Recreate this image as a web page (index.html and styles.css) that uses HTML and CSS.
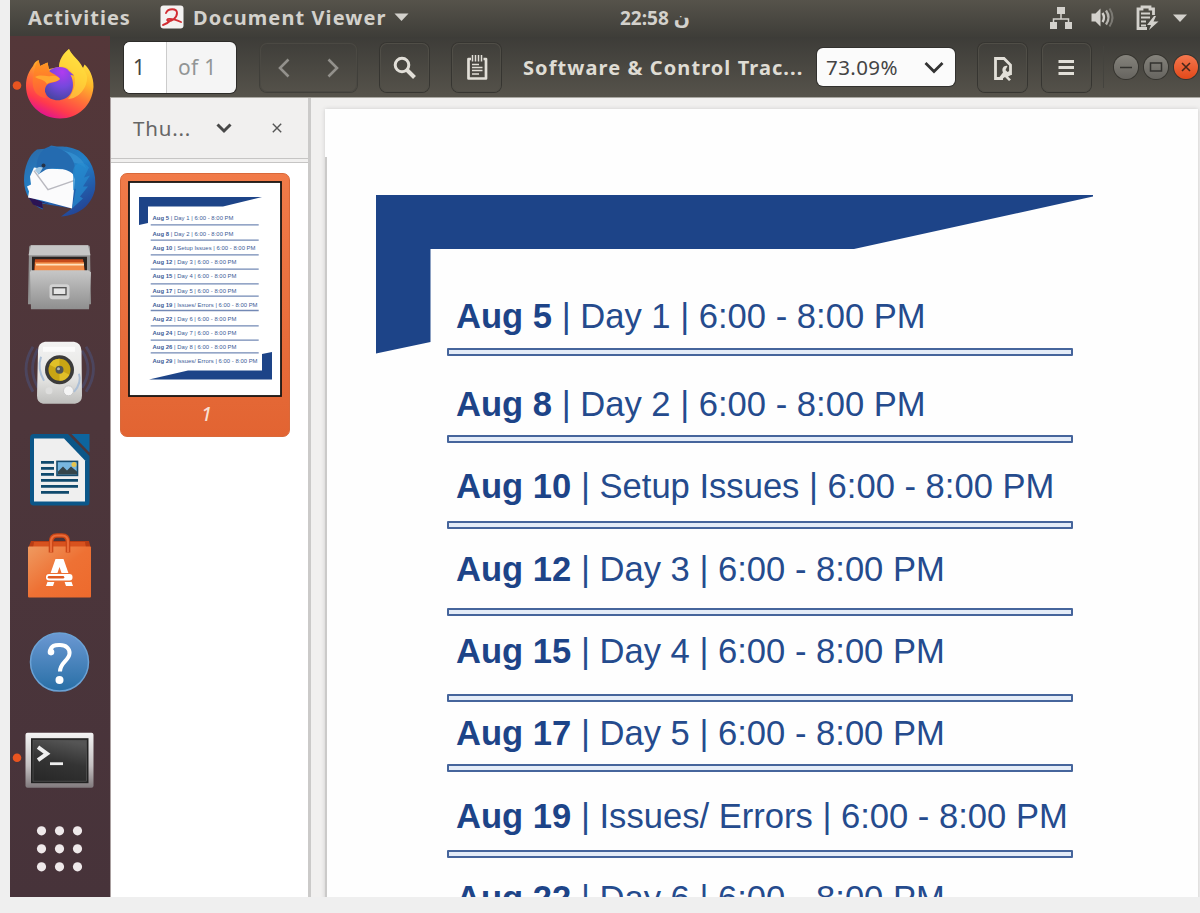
FILE: index.html
```html
<!DOCTYPE html>
<html lang="en">
<head>
<meta charset="utf-8">
<title>Document Viewer</title>
<link rel="stylesheet" href="styles.css">
</head>
<body>
<div class="screen">
  <header class="topbar">
    <span class="activities">Activities</span>
    <svg class="app-icon" width="24" height="24" viewBox="0 0 24 24"><rect x=".5" y=".5" width="23" height="23" rx="3" fill="#f4f2f1"/><path d="M6 8C8 3 17 3 17 8C17 13 11 17 8 16C5 14 10 12 21 17M3 20C7 19 9 17 11 15" fill="none" stroke="#d22d33" stroke-width="1.900" stroke-linecap="round"/></svg>
    <span class="app-name">Document Viewer</span>
    <svg class="app-caret" width="15" height="9" viewBox="0 0 15 9"><path d="M.5.500h14L7.500 8z" fill="#d3d1cc"/></svg>
    <span class="clock">22:58 <span class="day">ن</span></span>
    <svg class="tray" width="140" height="28" viewBox="1048 3 140 28" fill="#d3d1cc">
      <path d="M1057 6h8v7h-8zM1050 21h7v7h-7zM1065 21h7v7h-7z"/><path d="M1061 13v5M1053.500 22v-4h15v4" fill="none" stroke="#d3d1cc" stroke-width="1.500"/>
      <path d="M1091.500 12.500h4l5-5v18l-5-5h-4z"/>
      <path d="M1102.500 12q3 4.500 0 9" fill="none" stroke="#d3d1cc" stroke-width="2.400"/><path d="M1106 9.500q5 7 0 14" fill="none" stroke="#b5b3ae" stroke-width="2.400"/><path d="M1109.500 7.500q6 9 0 18" fill="none" stroke="#7b7973" stroke-width="2"/>
      <path d="M1147 27.500h-9V8h4V6h8v2h3.500v6" fill="none" stroke="#d3d1cc" stroke-width="2.800"/>
      <path d="M1141 12.500h9M1141 16.500h9M1141 20.500h5M1141 24.500h5" fill="none" stroke="#d3d1cc" stroke-width="2"/><path d="M1154 15l-7 9h4l-2 5 9.500-8.500h-5l2.500-5.500z"/>
      <path d="M1173 13.500h14l-7 7.500z"/>
    </svg>
  </header>

  <div class="desktop">
    <nav class="dock">
      <svg viewBox="10 36 100 96.400">
        <defs>
          <linearGradient id="fx" x1=".8" y1=".05" x2=".35" y2="1"><stop offset="0" stop-color="#fff04a"/><stop offset=".35" stop-color="#ffb82a"/><stop offset=".6" stop-color="#ff7139"/><stop offset=".83" stop-color="#ff3a4c"/><stop offset="1" stop-color="#e01490"/></linearGradient>
          <radialGradient id="ball" cx=".6" cy=".15" r=".9"><stop offset="0" stop-color="#b13bef"/><stop offset=".5" stop-color="#7548dd"/><stop offset="1" stop-color="#44459f"/></radialGradient>
          <linearGradient id="fox" x1="0" y1="0" x2="0" y2="1"><stop offset="0" stop-color="#ff9a20"/><stop offset=".5" stop-color="#ff7a2c"/><stop offset="1" stop-color="#ff5a3a"/></linearGradient>
        </defs>
        <circle cx="17" cy="85.500" r="4.300" fill="#e95420"/>
        <path d="M38.500 60L40 66L47.500 62.500L49 69L59 67C59 60 64 53 69 49C72 56 78 58 83 68L84.500 64.500C88 67 94 76 93.500 87C92 106 78 118.500 60 118.500C41 118.500 26 104 26 86C26 77 29 71 33 66C34 63 36 61 38.500 60Z" fill="url(#fx)"/>
        <path d="M69 49C61 55 59 62 59.500 67C67 65 71 71 74 75C77 85 72 94 68 99C78 99 88 88 87 76C84 66 73 58 69 49Z" fill="#ffdc3d" opacity=".65"/>
        <path d="M48 72C54 65 66 66 69 71L74 75.500L70.500 75C74 81 73.500 89 71 93C65 103 50 102 46 94C43 88 45 80 48 72Z" fill="url(#ball)"/>
        <path d="M38.500 60L40 66L47.500 62.500L49 71C53 74 57 75 60 79C56 83 51 82 48 84C44 87 44 93 47 98C38 98 31 91 33 78C34 72 35 64 38.500 60Z" fill="url(#fox)"/>
        <path d="M35 77C41 74 46 77 51 76Q57 75 60 79C56 83 51 81 47 84C44 79 40 80 35 77Z" fill="#ffa830"/>
      </svg>
      <svg viewBox="10 132.400 100 96.400">
        <defs><linearGradient id="tb" x1=".2" y1="0" x2=".8" y2="1"><stop offset="0" stop-color="#2b6cab"/><stop offset=".45" stop-color="#2281c8"/><stop offset=".75" stop-color="#225aa8"/><stop offset="1" stop-color="#243f91"/></linearGradient></defs>
        <path d="M37 150C29 155 24 168 24 181C24 195 32 206 43 210L42 204L72 209L61 217C78 216 91 207 95 190C97 173 91 159 79 151C68 146 61 147 57 147L51 146L47 149Z" fill="url(#tb)"/>
        <path d="M28 197L33 205L43 209L42 203L50 205Z" fill="#2b1454"/>
        <path d="M56 150C70 151 83 157 86 169C79 162 70 164 63 158C58 154 52 155 49 153Z" fill="#3591d2" opacity=".75"/>
        <path d="M34 168L42 169L71 170L75 180L72 209L42 201L28 198L29 192L27 187L31 185L30 177Z" fill="#fbfbfc"/>
        <path d="M34 171L48 190L74 181" fill="none" stroke="#b9b9c0" stroke-width="1.500"/>
        <path d="M38 174C34 163 40 149 50 147C66 149 77 158 75 176C66 168 54 167 46 170L38 175Z" fill="#246bb0"/>
        <path d="M73 173C73 163 83 160 89 168L84 178L90 176L83 187L88 187L80 197L83 199L72 209L76 189L73 191Z" fill="#258bd0" opacity=".7"/>
        <path d="M35 171Q37 166 43 168L39 175Z" fill="#a4c9e3"/><circle cx="43.500" cy="166" r="2" fill="#263348"/>
      </svg>
      <svg viewBox="10 228.800 100 96.400">
        <defs><linearGradient id="fl" x1="0" y1="0" x2="0" y2="1"><stop offset="0" stop-color="#c7c7c7"/><stop offset="1" stop-color="#8f8f8f"/></linearGradient></defs>
        <path d="M31 245h57q2 0 2 3l1 56H28l1-56q0-3 2-3z" fill="#929292"/><path d="M31 245h57l2.500 10H28.500z" fill="#c6c6c6"/><path d="M32 256.500h55v15H32z" fill="#292321"/>
        <path d="M35 259h48l2 12H34z" fill="#c64b1b"/><path d="M35 262h49v10H35z" fill="#f28b46"/><path d="M36 264.500h48" stroke="#ffe1bc" stroke-width="1.800"/>
        <path d="M31 270h57l3 2-2 37H31L30 272z" fill="url(#fl)"/><rect x="49.500" y="284" width="20" height="15" rx="3" fill="#d2d2d2"/><rect x="53" y="287.500" width="13" height="7" fill="#e6e6e6" stroke="#555" stroke-width="1.400"/>
      </svg>
      <svg viewBox="10 325.200 100 96.400">
        <defs><linearGradient id="sp" x1="0" y1="0" x2="0" y2="1"><stop offset="0" stop-color="#f3f3f2"/><stop offset=".6" stop-color="#e4e4e2"/><stop offset="1" stop-color="#bebebc"/></linearGradient></defs>
        <g fill="none" stroke="#4a5d93" stroke-width="2.800" opacity=".4"><path d="M33 347q-14 22 0 45M38 349q-11 20 0 39M86 347q15 22 0 45M82 351q12 18 0 37"/></g>
        <path d="M45 342h29q7 1 7.500 9l.5 45q0 7-7 8H43q-6-1-6-8l1-45q0-8 7-9z" fill="url(#sp)"/><path d="M43 347h32v5H43z" fill="#fff" opacity=".7"/>
        <circle cx="59.500" cy="370" r="14.500" fill="#3b3b3b"/><circle cx="59.500" cy="370" r="11" fill="#c8a514"/><path d="M59.500 370l-10-5a11 11 0 0 1 10-6zM59.500 370l10 5a11 11 0 0 1-10 6z" fill="#e0c028"/><circle cx="59.500" cy="370" r="4" fill="#515654"/><circle cx="58.500" cy="369" r="1.500" fill="#b4bab7"/>
        <circle cx="68.500" cy="391" r="5" fill="#f4f4f4" stroke="#c6c6c6"/><circle cx="49" cy="391" r="3.500" fill="#dededd"/><path d="M41 357q-4 12 3 24M79 374q3 9-5 18" fill="none" stroke="#acbfd6" stroke-width="2"/>
      </svg>
      <svg viewBox="10 421.600 100 96.400">
        <path d="M33 433.500h35l21.500 22v46q0 3.500-3 3.500H33q-3-.5-3-4v-63q0-4 3-4.500z" fill="#0b5688"/><path d="M71.500 433.500h18v18.500z" fill="#0d659f"/><path d="M34 438h30L85 460v41H34z" fill="#efefef"/>
        <path d="M41 462h13M41 468h13M41 474h13M41 480h37M41 486h37M41 492h28" stroke="#104a6d" stroke-width="2.800"/><rect x="57" y="461" width="20.500" height="14" fill="#78b7df" stroke="#164b6d" stroke-width="1.600"/><path d="M58 474v-3l5-5 4 4 4-4 6 5v3z" fill="#35454a"/><circle cx="74" cy="464" r="2.500" fill="#e6c44d"/>
      </svg>
      <svg viewBox="10 518 100 96.400">
        <defs><linearGradient id="bg" x1="0" y1="0" x2="1" y2="1"><stop offset="0" stop-color="#ef9a60"/><stop offset=".5" stop-color="#ee7134"/><stop offset="1" stop-color="#ed6a2d"/></linearGradient></defs>
        <path d="M31 541l58 0 2 8H28z" fill="#b93d14"/><path d="M34 542h51l1 6H33z" fill="#d8521e"/><rect x="28" y="546.500" width="63" height="51" rx="1" fill="url(#bg)"/>
        <path d="M51 552.500v-10q0-7 6-7h5q6 0 6 7v10" fill="none" stroke="#c94516" stroke-width="4.600"/><path d="M51 552v-10q0-6.500 6-6.500h5q6 0 6 6.500v10" fill="none" stroke="#ea6c38" stroke-width="2.200"/>
        <path d="M55.500 559h8l9.500 27H66l-6.500-19-6.500 19h-7z" fill="#fff"/><rect x="45" y="573" width="28.500" height="9" rx="3.500" fill="#ee7134"/><rect x="46" y="574" width="26.500" height="6.500" rx="3" fill="#fff"/><path d="M49 577.200h14" stroke="#df5a22" stroke-width="2.500" stroke-linecap="round"/>
      </svg>
      <svg viewBox="10 614.400 100 96.400">
        <defs><linearGradient id="hp" x1="0" y1="0" x2="0" y2="1"><stop offset="0" stop-color="#6b98d2"/><stop offset="1" stop-color="#286fa6"/></linearGradient></defs>
        <circle cx="59.500" cy="662.500" r="29" fill="url(#hp)" stroke="#6ba2d5" stroke-width="1.500"/>
        <path d="M50 652C51 645 56 645.500 60 645.500C66 645.500 70 649 69.500 654C69 661 60 663 60 672" fill="none" stroke="#fff" stroke-width="4"/><circle cx="51" cy="652.500" r="3.300" fill="#fff"/><circle cx="59.500" cy="680.500" r="4" fill="#fff"/>
      </svg>
      <svg viewBox="10 710.800 100 96.400">
        <defs><linearGradient id="te" x1="0" y1="0" x2="0" y2="1"><stop offset="0" stop-color="#f4f4f4"/><stop offset=".6" stop-color="#c4c0c1"/><stop offset="1" stop-color="#817a7d"/></linearGradient><linearGradient id="scr" x1=".6" y1="0" x2=".3" y2="1"><stop offset="0" stop-color="#555"/><stop offset=".5" stop-color="#343434"/><stop offset="1" stop-color="#292929"/></linearGradient></defs>
        <circle cx="17" cy="757.500" r="4.300" fill="#e95420"/><rect x="25.500" y="732.500" width="68" height="55" rx="2" fill="url(#te)"/><rect x="31" y="738" width="57.500" height="45" fill="#222"/><rect x="33" y="740" width="53.500" height="41" fill="url(#scr)" stroke="#575757" stroke-width=".7"/>
        <path d="M38 747l9 6.500-9 6.500" fill="none" stroke="#efefef" stroke-width="4"/><path d="M50 763.500h13" stroke="#efefef" stroke-width="2.800"/>
      </svg>
      <svg class="apps" viewBox="10 807.200 100 89.800" fill="#efe9ea"><circle cx="41.500" cy="831" r="4.600"/><circle cx="59.500" cy="831" r="4.600"/><circle cx="77.500" cy="831" r="4.600"/><circle cx="41.500" cy="849" r="4.600"/><circle cx="59.500" cy="849" r="4.600"/><circle cx="77.500" cy="849" r="4.600"/><circle cx="41.500" cy="867" r="4.600"/><circle cx="59.500" cy="867" r="4.600"/><circle cx="77.500" cy="867" r="4.600"/></svg>
    </nav>

    <main class="window">
      <div class="toolbar">
        <div class="pager"><span class="page-number">1</span><span class="page-total">of 1</span></div>
        <div class="button nav"><svg width="97" height="49" viewBox="260 43 97 49" fill="none" stroke="#93918c" stroke-width="2.600"><path d="M288.500 59.500l-8.500 8.500 8.500 8.500M328.500 59.500l8.500 8.500-8.500 8.500"/></svg></div>
        <div class="button search"><svg width="49" height="49" viewBox="380 43 49 49" fill="none" stroke="#e2dfd8"><circle cx="402" cy="65" r="6.800" stroke-width="3"/><path d="M407 70l7.500 7.500" stroke-width="4"/></svg></div>
        <div class="button notes"><svg width="49" height="49" viewBox="452 43 49 49" fill="none" stroke="#e2dfd8"><path d="M471 59h-2.500v19.500h17.500V59h-2.500" stroke-width="2.700" stroke-linejoin="round"/><path d="M472.500 55v6.500M475.500 55v6.500M478.500 55v6.500M481.500 55v6.500" stroke-width="1.500"/><path d="M472 64.500h7M472 67.500h10.500M472 70.500h10.500M472 74h7" stroke-width="1.600"/></svg></div>
        <span class="title">Software &amp; Control Trac...</span>
        <div class="zoom"><span class="zoom-value">73.09%</span><svg width="20" height="13" viewBox="0 0 20 13"><path d="M1.500 2l8.500 8.500L18.500 2" fill="none" stroke="#333" stroke-width="2.800"/></svg></div>
        <div class="button props"><svg width="49" height="49" viewBox="978 43 49 49"><path d="M1003 78.500h-7.500V58.500h8.500l6.500 6.500v10" fill="none" stroke="#e2dfd8" stroke-width="2.800"/><path d="M999.500 77l3.500-4.500c-2-4.500 1.500-7.500 4.500-6.500l-2 4 2 2 3.500-2v5l-3 1.500 3 3-2 1.500-4-4-3 2z" fill="#e2dfd8"/></svg></div>
        <div class="button menu"><svg width="49" height="49" viewBox="1041 43 49 49"><path d="M1057.500 61.500h15.500M1057.500 67.500h15.500M1057.500 73.500h15.500" stroke="#e2dfd8" stroke-width="3"/></svg></div>
        <span class="divider"></span>
        <span class="control"><svg width="24" height="24" viewBox="0 0 24 24"><path d="M6 12.500h12" stroke="#33322f" stroke-width="1.500"/></svg></span>
        <span class="control"><svg width="24" height="24" viewBox="0 0 24 24"><rect x="6.500" y="8" width="11" height="8" fill="none" stroke="#33322f" stroke-width="1.500"/></svg></span>
        <span class="control close"><svg width="24" height="24" viewBox="0 0 24 24"><path d="M8 8l8 8M16 8l-8 8" stroke="#46261a" stroke-width="1.600"/></svg></span>
      </div>

      <div class="content">
        <aside class="sidebar">
          <div class="side-head"><span class="side-title">Thu...</span>
            <svg class="side-caret" width="16" height="11" viewBox="0 0 16 11"><path d="M1.500 1.500L8 8l6.500-6.500" fill="none" stroke="#484848" stroke-width="3"/></svg>
            <svg class="side-close" width="10" height="10" viewBox="0 0 10 10"><path d="M.8.800l8.400 8.400M9.200.800L.8 9.200" stroke="#555" stroke-width="1.400"/></svg>
          </div>
          <div class="thumbs"><div class="thumb">
            <svg class="thumb-page" width="154" height="216" viewBox="128 181.500 154 216">
              <rect x="129" y="182.500" width="152" height="214" fill="#fff" stroke="#171311" stroke-width="1.800"/>
              <path d="M139 197.500h123L223 207h-75v16.500l-9 2zM272 352.500v27.500H149L188 371h74v-16.500z" fill="#1d4488"/>
              <path d="M150.700 225.300h108M150.700 240.700h108M150.700 255.300h108M150.700 269.700h108M150.700 284.300h108M150.700 296.700h108M150.700 311h108M150.700 326.300h108M150.700 340.700h108M150.700 353.300h108" stroke="#7389b5" stroke-width="1.300"/>
              <g class="thumb-text">
                <text x="152.500" y="220.700" textLength="81"><tspan>Aug 5</tspan> | Day 1 | 6:00 - 8:00 PM</text>
                <text x="152.500" y="236" textLength="81"><tspan>Aug 8</tspan> | Day 2 | 6:00 - 8:00 PM</text>
                <text x="152.500" y="250" textLength="103"><tspan>Aug 10</tspan> | Setup Issues | 6:00 - 8:00 PM</text>
                <text x="152.500" y="264.700" textLength="84"><tspan>Aug 12</tspan> | Day 3 | 6:00 - 8:00 PM</text>
                <text x="152.500" y="278.700" textLength="84"><tspan>Aug 15</tspan> | Day 4 | 6:00 - 8:00 PM</text>
                <text x="152.500" y="293" textLength="84"><tspan>Aug 17</tspan> | Day 5 | 6:00 - 8:00 PM</text>
                <text x="152.500" y="307" textLength="105"><tspan>Aug 19</tspan> | Issues/ Errors | 6:00 - 8:00 PM</text>
                <text x="152.500" y="321" textLength="84"><tspan>Aug 22</tspan> | Day 6 | 6:00 - 8:00 PM</text>
                <text x="152.500" y="335" textLength="84"><tspan>Aug 24</tspan> | Day 7 | 6:00 - 8:00 PM</text>
                <text x="152.500" y="349.300" textLength="84"><tspan>Aug 26</tspan> | Day 8 | 6:00 - 8:00 PM</text>
                <text x="152.500" y="363.300" textLength="105"><tspan>Aug 29</tspan> | Issues/ Errors | 6:00 - 8:00 PM</text>
              </g>
            </svg>
            <span class="thumb-label">1</span>
          </div></div>
        </aside>

        <section class="viewer"><div class="page">
          <svg class="corner" width="720" height="162" viewBox="374 193 720 162"><path d="M376 195h717v1.500L854 249H430.500v93L376 353.500z" fill="#1d4488"/></svg>
          <ul class="schedule">
            <li><p><b>Aug 5</b> | Day 1 | 6:00 - 8:00 PM</p></li>
            <li><p><b>Aug 8</b> | Day 2 | 6:00 - 8:00 PM</p></li>
            <li><p><b>Aug 10</b> | Setup Issues | 6:00 - 8:00 PM</p></li>
            <li><p><b>Aug 12</b> | Day 3 | 6:00 - 8:00 PM</p></li>
            <li><p><b>Aug 15</b> | Day 4 | 6:00 - 8:00 PM</p></li>
            <li><p><b>Aug 17</b> | Day 5 | 6:00 - 8:00 PM</p></li>
            <li><p><b>Aug 19</b> | Issues/ Errors | 6:00 - 8:00 PM</p></li>
            <li><p><b>Aug 22</b> | Day 6 | 6:00 - 8:00 PM</p></li>
          </ul>
        </div></section>
      </div>
    </main>
  </div>
</div>
</body>
</html>
```
FILE: styles.css
```css
*, *::after { box-sizing: border-box; }
body { margin: 0; width: 1200px; height: 913px; overflow: hidden; background: #efefef; font-family: "Noto Sans", "DejaVu Sans", sans-serif; }
svg { display: block; flex: none; }
.screen { margin-left: 10px; height: 897px; overflow: hidden; display: flex; flex-direction: column; }

.topbar { height: 37px; flex: none; display: flex; align-items: center; padding-bottom: 2px; background: linear-gradient(#56534b, #3e3d38); color: #d3d1cc; font-size: 20px; font-weight: 700; white-space: nowrap; }
.topbar span { line-height: 28px; }
.activities { width: 132px; padding-left: 18px; letter-spacing: 1px; }
.app-icon { margin: 0 9px 0 18px; position: relative; top: -1px; }
.app-name { width: 194px; letter-spacing: 1.080px; }
.app-caret { margin-left: 7px; }
.clock { margin-left: 211px; width: 84px; font-size: 19px; }
.topbar .day { font-family: "DejaVu Sans", sans-serif; line-height: 20px; }
.tray { margin-left: auto; margin-right: 12px; }

.desktop { flex: 1; min-height: 0; display: flex; }
.dock { width: 100px; flex: none; margin-top: -1px; display: flex; flex-direction: column; background: linear-gradient(#543739, #4d363b 45%, #47333a); overflow: hidden; }
.dock svg { width: 100px; height: 96.400px; }
.dock .apps { height: 89.800px; }

.window { flex: 1; min-width: 0; display: flex; flex-direction: column; }
.toolbar { height: 61px; flex: none; display: flex; align-items: center; padding-left: 14px; background: linear-gradient(#3d3c38, #56534b); border-bottom: 1px solid #aaa8a2; }
.pager { width: 112px; height: 51px; flex: none; display: flex; border-radius: 6px; overflow: hidden; background: #f5f5f5; font-size: 21px; line-height: 50px; box-shadow: 0 0 0 1px #2d2c29; }
.page-number { width: 43px; padding-left: 9px; background: #fff; color: #444; border-right: 1px solid #ccc; }
.page-total { padding-left: 11px; color: #929595; letter-spacing: .3px; }
.button { width: 49px; height: 49px; flex: none; border-radius: 7px; box-shadow: 0 0 0 1px #363531, inset 0 0 0 1px #504e47; }
.nav { width: 97px; margin-left: 24px; box-shadow: 0 0 0 1px #403f3a, inset 0 0 0 1px #4b4943; }
.search { margin-left: 23px; }
.notes { margin-left: 23px; }
.title { width: 294px; flex: none; margin-left: 22px; color: #dfdcd4; font-size: 20px; font-weight: 700; letter-spacing: 1.080px; white-space: nowrap; }
.zoom { width: 138px; height: 38px; flex: none; display: flex; align-items: center; justify-content: space-between; padding: 0 11px 0 9px; background: #fbfbfb; border-radius: 6px; box-shadow: 0 0 0 1px #32312e; color: #444; font-size: 20.500px; letter-spacing: .4px; }
.props { margin-left: 23px; }
.menu { margin-left: 15px; }
.divider { width: 1px; height: 42px; margin: 0 10px 0 12px; background: #44433e; }
.control { width: 24px; height: 24px; flex: none; margin-right: 6px; border-radius: 50%; background: linear-gradient(#85837c, #66645f); box-shadow: 0 0 0 1px #35342f; }
.close { margin-right: 0; background: linear-gradient(#f4774e, #e2491a); }

.content { flex: 1; min-height: 0; display: flex; background: #f1f0ef; }
.sidebar { width: 201px; flex: none; display: flex; flex-direction: column; border-left: 1px solid #aaa0a0; border-right: 3px solid #cbcac9; }
.side-head { height: 65px; flex: none; display: flex; align-items: center; padding: 0 26px 4px 22px; border-bottom: 1px solid #c6c5c4; box-shadow: inset 0 -3px #f1f0ef, inset 0 -4px #c6c5c4; color: #666; }
.side-title { width: 83px; font-size: 20.500px; letter-spacing: .8px; }
.side-close { margin-left: auto; }
.thumbs { flex: 1; padding: 10px 0 0 9px; background: #fff; }
.thumb { width: 170px; height: 264px; padding: 7px 0 0 7px; border: 1px solid #d9693a; border-radius: 7px; background: linear-gradient(#f17b49, #e26432); }
.thumb-text { font: 5.900px "Liberation Sans", Arial, sans-serif; fill: #3c5b96; }
.thumb-text tspan { font-weight: 700; }
.thumb-label { display: block; width: 154px; padding-left: 3px; text-align: center; font-size: 19px; font-style: italic; font-weight: 500; line-height: 34px; color: #f8dfd2; }

.viewer { flex: 1; min-width: 0; padding: 11px 2px 0 14px; overflow: hidden; }
.page { height: 1000px; padding: 84px 0 0 49px; background: linear-gradient(#cbcac9, #cbcac9) 0 48px / 2px 100% no-repeat, #fefefe; box-shadow: 0 0 4px #ccc; }
.schedule { list-style: none; width: 626px; margin: -59px 0 0 73px; padding: 0; color: #254b8d; font: 34.600px/40px "Liberation Sans", Arial, sans-serif; }
.schedule p { margin: 0; padding-left: 9px; white-space: nowrap; }
.schedule b { color: #1d4488; }
.schedule li::after { content: ""; display: block; height: 8px; border: 2px solid #46659c; border-radius: 1px; background: #e4ecf8; }
.schedule li:nth-child(1) p { padding-top: 0; padding-bottom: 12px; }
.schedule li:nth-child(2) p { padding-top: 28px; padding-bottom: 11px; }
.schedule li:nth-child(3) p { padding-top: 23px; padding-bottom: 15px; }
.schedule li:nth-child(4) p { padding-top: 20px; padding-bottom: 19px; }
.schedule li:nth-child(5) p { padding-top: 15px; padding-bottom: 23px; }
.schedule li:nth-child(6) p { padding-top: 11px; padding-bottom: 11px; }
.schedule li:nth-child(7) p { padding-top: 24px; padding-bottom: 14px; }
.schedule li:nth-child(8) p { padding-top: 20px; padding-bottom: 14px; }
```
